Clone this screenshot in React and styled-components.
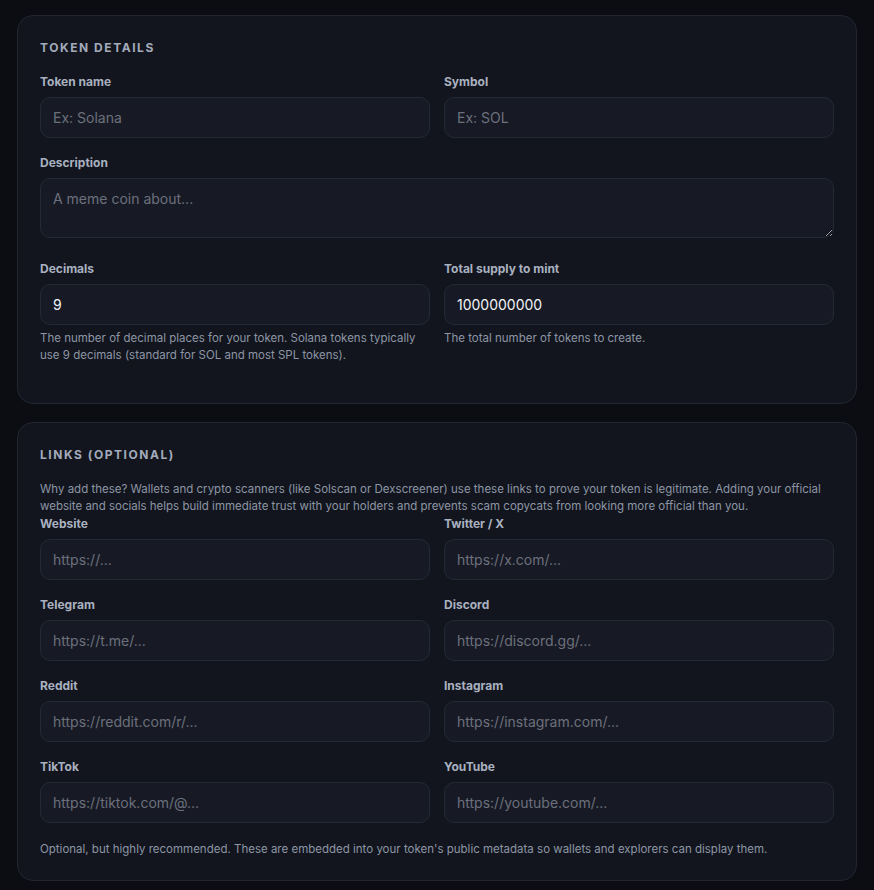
import React, { useState } from 'react';
import styled, { createGlobalStyle } from 'styled-components';

const GlobalStyle = createGlobalStyle`
  html, body {
    margin: 0;
    padding: 0;
    background: #0b0d12;
  }
  body {
    font-family: Inter, "Noto Sans", sans-serif;
    color: #e6e8ee;
  }
  * { box-sizing: border-box; }
`;

const Page = styled.div`
  padding: 15px 17px 10px;
  display: flex;
  flex-direction: column;
  gap: 18px;
  min-height: 890px;
`;

const Card = styled.section`
  background: #12151d;
  border: 1px solid #22262f;
  border-radius: 16px;
  padding: 24px 22px ${p => p.$bottom || 24}px;
`;

const Title = styled.h2`
  margin: 0 0 18px;
  font-size: 12px;
  line-height: 16px;
  font-weight: 700;
  letter-spacing: 1.55px;
  text-transform: uppercase;
  color: #a3abbb;
`;

const Intro = styled.p`
  margin: 0 0 1px;
  font-size: 11.5px;
  line-height: 17px;
  color: #8d95a5;
`;

const Grid = styled.div`
  display: grid;
  grid-template-columns: 1fr 1fr;
  column-gap: 14px;
  row-gap: 17px;
`;

const Field = styled.div`
  display: flex;
  flex-direction: column;
  grid-column: ${p => (p.$wide ? '1 / -1' : 'auto')};
`;

const Label = styled.label`
  font-size: 12px;
  line-height: 16px;
  font-weight: 700;
  color: #a9b1c0;
  margin-bottom: 7px;
`;

const Input = styled.input`
  height: 41px;
  width: 100%;
  padding: 0 12px;
  background: #171a25;
  border: 1px solid #242936;
  border-radius: 10px;
  font-family: Inter, "Noto Sans", sans-serif;
  font-size: 14px;
  color: #f1f3f7;
  outline: none;
  &::placeholder { color: #6c707c; }
`;

const TextArea = styled.textarea`
  display: block;
  height: 60px;
  width: 100%;
  padding: 11px 12px;
  margin-bottom: 6px;
  background: #171a25;
  border: 1px solid #242936;
  border-radius: 10px;
  font-family: Inter, "Noto Sans", sans-serif;
  font-size: 14px;
  color: #f1f3f7;
  outline: none;
  resize: vertical;
  &::placeholder { color: #6c707c; }
`;

const Hint = styled.p`
  margin: 5px 0 0;
  font-size: 11.5px;
  line-height: 17px;
  color: #8d95a5;
`;

const Footnote = styled(Hint)`
  margin-top: 18px;
`;

const links = [
  ['Website', 'https://...'],
  ['Twitter / X', 'https://x.com/...'],
  ['Telegram', 'https://t.me/...'],
  ['Discord', 'https://discord.gg/...'],
  ['Reddit', 'https://reddit.com/r/...'],
  ['Instagram', 'https://instagram.com/...'],
  ['TikTok', 'https://tiktok.com/@...'],
  ['YouTube', 'https://youtube.com/...'],
];

const App = () => {
  const [decimals, setDecimals] = useState('9');
  const [supply, setSupply] = useState('1000000000');

  return (
    <Page>
      <GlobalStyle />
      <Card $bottom={39}>
        <Title>Token details</Title>
        <Grid>
          <Field>
            <Label htmlFor='name'>Token name</Label>
            <Input id='name' placeholder='Ex: Solana' />
          </Field>
          <Field>
            <Label htmlFor='symbol'>Symbol</Label>
            <Input id='symbol' placeholder='Ex: SOL' />
          </Field>
          <Field $wide>
            <Label htmlFor='description'>Description</Label>
            <TextArea id='description' placeholder='A meme coin about...' />
          </Field>
          <Field>
            <Label htmlFor='decimals'>Decimals</Label>
            <Input id='decimals' value={decimals} onChange={e => setDecimals(e.target.value)} />
            <Hint>
              The number of decimal places for your token. Solana tokens typically
              use 9 decimals (standard for SOL and most SPL tokens).
            </Hint>
          </Field>
          <Field>
            <Label htmlFor='supply'>Total supply to mint</Label>
            <Input id='supply' value={supply} onChange={e => setSupply(e.target.value)} />
            <Hint>The total number of tokens to create.</Hint>
          </Field>
        </Grid>
      </Card>

      <Card $bottom={22}>
        <Title>Links (optional)</Title>
        <Intro>
          Why add these? Wallets and crypto scanners (like Solscan or Dexscreener) use these links to
          prove your token is legitimate. Adding your official website and socials helps build immediate
          trust with your holders and prevents scam copycats from looking more official than you.
        </Intro>
        <Grid>
          {links.map(([label, placeholder]) => (
            <Field key={label}>
              <Label>{label}</Label>
              <Input placeholder={placeholder} />
            </Field>
          ))}
        </Grid>
        <Footnote>
          Optional, but highly recommended. These are embedded into your token's public metadata so
          wallets and explorers can display them.
        </Footnote>
      </Card>
    </Page>
  );
};

export default App;
